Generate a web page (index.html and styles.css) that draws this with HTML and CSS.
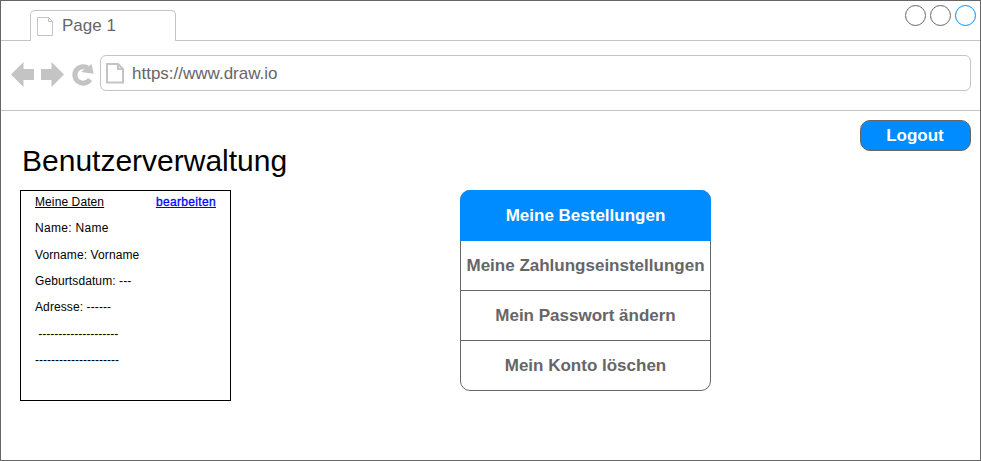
FILE: index.html
```html
<!DOCTYPE html>
<html lang="de">
<head>
<meta charset="utf-8">
<title>Benutzerverwaltung</title>
<link rel="stylesheet" href="styles.css">
</head>
<body>
<div class="window">
  <header class="tabs">
    <div class="tabs-lead"></div>
    <div class="tab">
      <svg class="tab-icon" width="17" height="20" viewBox="0 0 17 20"><path d="M.5.5h11l4 4v14H.5zM11.500.5v4h4"/></svg>
      <span>Page 1</span>
    </div>
    <div class="tabs-rest">
      <svg width="72" height="22" viewBox="0 0 72 22" class="controls">
        <circle cx="10.500" cy="10.500" r="10"/><circle cx="35.500" cy="10.500" r="10"/><circle class="active" cx="60.500" cy="10.500" r="10"/>
      </svg>
    </div>
  </header>
  <nav class="toolbar">
    <svg class="nav-icons" width="88" height="36" viewBox="0 0 88 36">
      <path d="M0 19.500 12.500 7v7H23v11H12.500v7z"/>
      <path d="M53 19.500 40.500 7v7H30v11h10.500v7z"/>
      <path class="reload" d="M79 24.300A8.200 8.200 0 1 1 78 14.300"/>
      <path d="M80.500 9 82.700 18.800 70 17z"/>
    </svg>
    <div class="address">
      <svg class="page-icon" width="18" height="21" viewBox="0 0 18 21"><path d="M1 1h11l5 5v13.500H1zM12 1v5h5"/></svg>
      <span>https://www.draw.io</span>
    </div>
  </nav>
  <main class="content">
    <button class="logout">Logout</button>
    <h1>Benutzerverwaltung</h1>
    <div class="columns">
      <section class="data">
        <p class="data-head"><u>Meine Daten</u><a href="#">bearbeiten</a></p>
        <p class="name">Name: Name</p>
        <p>Vorname: Vorname</p>
        <p>Geburtsdatum: ---</p>
        <p>Adresse: ------</p>
        <p class="blank">&nbsp;--------------------</p>
        <p class="blank">---------------------</p>
      </section>
      <ul class="menu">
        <li class="selected">Meine Bestellungen</li>
        <li>Meine Zahlungseinstellungen</li>
        <li>Mein Passwort ändern</li>
        <li>Mein Konto löschen</li>
      </ul>
    </div>
  </main>
</div>
</body>
</html>
```
FILE: styles.css
```css
* { box-sizing: border-box; }
body { margin: 0; background: #fff; font-family: "Liberation Sans", Arial, sans-serif; }
.window { width: 981px; height: 461px; border: 1px solid #666; overflow: hidden; }
svg { display: block; flex: none; }

.tabs { display: flex; height: 40px; }
.tabs-lead { width: 29px; border-bottom: 1px solid #c4c4c4; }
.tab { display: flex; width: 146px; height: 31px; margin-top: 9px; padding: 6px 0 0 6px; gap: 8px; border: 1px solid #c4c4c4; border-bottom: 0; border-radius: 5px 5px 0 0; font-size: 17px; line-height: 17px; color: #666; }
.tab-icon path { fill: none; stroke: #c4c4c4; }
.tabs-rest { flex: 1; display: flex; justify-content: flex-end; padding: 4px 3px 0 0; border-bottom: 1px solid #c4c4c4; }
.controls { fill: none; stroke: #666; }
.controls .active { stroke: #008cff; }

.toolbar { display: flex; height: 70px; padding: 14px 9px 0 10px; gap: 1px; border-bottom: 1px solid #c4c4c4; }
.nav-icons { fill: #c4c4c4; }
.nav-icons .reload { fill: none; stroke: #c4c4c4; stroke-width: 5; }
.address { display: flex; flex: 1; align-items: center; height: 36px; padding-left: 5px; gap: 8px; border: 1px solid #c4c4c4; border-radius: 6px; font-size: 17px; color: #666; }
.address span { padding-top: 2px; }
.page-icon path { fill: none; stroke: #c4c4c4; stroke-width: 2; }

.content { display: flex; flex-direction: column; padding: 9px 9px 0 19px; }
.logout { align-self: flex-end; width: 111px; height: 31px; padding: 0 1px 0 0; border: 1px solid #666; border-radius: 10px; background: #008cff; color: #fff; font: bold 17px "Liberation Sans", Arial, sans-serif; }
h1 { margin: -8px 0 0 2px; font-size: 30px; font-weight: 400; line-height: 36px; color: #000; }
.columns { display: flex; gap: 229px; margin-top: 11px; }
.data { width: 211px; height: 211px; padding: 3.700px 14px 0; border: 1px solid #000; font-size: 12px; line-height: 14.400px; letter-spacing: .1px; }
.data p { margin: 0 0 12px; }
.data .name { letter-spacing: .3px; }
.data .blank { letter-spacing: 0; }
.data-head { display: flex; justify-content: space-between; }
.data a { color: #00f; letter-spacing: .34px; -webkit-text-stroke: .3px #00f; }
.menu { width: 251px; height: 201px; margin: 0; padding: 0; list-style: none; border: 1px solid #666; border-radius: 10px; color: #666; font-size: 17px; font-weight: 700; text-align: center; }
.menu li { height: 50px; border-bottom: 1px solid #666; line-height: 49px; white-space: nowrap; }
.menu li:last-child { border-bottom: 0; }
.menu .selected { height: 51px; margin: -1px -1px 0; border: 0; border-radius: 10px 10px 0 0; background: #008cff; color: #fff; line-height: 51px; }
```
